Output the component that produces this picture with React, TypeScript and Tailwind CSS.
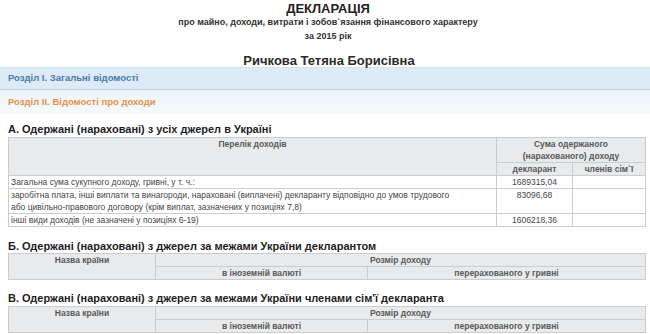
export default function App() {
  const th = "border border-[#c9cdd0] bg-[#e8eaeb] font-bold text-[#5a5a5a] text-center align-top leading-[12px] p-0";
  const td = "border border-[#c9cdd0] bg-white text-[#454545] leading-[12px] p-0 align-top";

  return (
    <div className="w-[650px] h-[334px] overflow-hidden bg-white font-['Liberation_Sans',Arial,sans-serif]">
      {/* title */}
      <div className="pt-[2px] pl-[6px] text-center text-[#222] font-bold">
        <div className="text-[13px] leading-[14px]">ДЕКЛАРАЦІЯ</div>
        <div className="text-[9px] leading-[12px] text-[#333]">про майно, доходи, витрати і зобов`язання фінансового характеру</div>
        <div className="text-[9px] leading-[16px] text-[#333]">за 2015 рік</div>
      </div>
      <div className="mt-[10px] pl-[8px] text-center text-[13px] leading-[13px] font-bold text-[#2a2a2a]">Ричкова Тетяна Борисівна</div>

      {/* sections */}
      <div className="h-[23px] border-t border-b border-t-[#d3e3f0] border-b-[#b9d2e6] bg-[#dcebf7] px-[8px] flex items-center text-[9.5px] font-bold text-[#4a7ca5]">
        Розділ І. Загальні відомості
      </div>
      <div className="h-[24px] bg-gradient-to-b from-[#edf4f9] to-[#f7fafc] px-[8px] flex items-center text-[9.5px] font-bold text-[#e3924a]">
        Розділ ІІ. Відомості про доходи
      </div>

      <div className="pl-[8px] pr-[5px]">
        {/* A */}
        <div className="mt-[7px] text-[11px] leading-[16px] font-bold text-[#1e1e1e]">А. Одержані (нараховані) з усіх джерел в Україні</div>
        <table className="w-[637px] border-collapse table-fixed text-[8.5px]">
          <colgroup>
            <col className="w-[488px]" />
            <col className="w-[76px]" />
            <col className="w-[73px]" />
          </colgroup>
          <tbody>
            <tr className="h-[24px]">
              <th rowSpan={2} className={th}>Перелік доходів</th>
              <th colSpan={2} className={th}>Сума одержаного<br />(нарахованого) доходу</th>
            </tr>
            <tr className="h-[13px]">
              <th className={th}>декларант</th>
              <th className={th}>членів сім`ї</th>
            </tr>
            <tr className="h-[13px]">
              <td className={td + " pl-[2px]"}>Загальна сума сукупного доходу, гривні, у т. ч.:</td>
              <td className={td + " text-center"}>1689315,04</td>
              <td className={td}></td>
            </tr>
            <tr className="h-[24px]">
              <td className={td + " pl-[2px]"}>
                <div className="whitespace-nowrap">заробітна плата, інші виплати та винагороди, нараховані (виплачені) декларанту відповідно до умов трудового</div>
                <div className="whitespace-nowrap">або цивільно-правового договору (крім виплат, зазначених у позиціях 7,8)</div>
              </td>
              <td className={td + " text-center"}>83096,68</td>
              <td className={td}></td>
            </tr>
            <tr className="h-[12px]">
              <td className={td + " pl-[2px]"}>інші види доходів (не зазначені у позиціях 6-19)</td>
              <td className={td + " text-center"}>1606218,36</td>
              <td className={td}></td>
            </tr>
          </tbody>
        </table>

        {/* Б */}
        <div className="mt-[12px] text-[11px] leading-[14px] font-bold text-[#1e1e1e]">Б. Одержані (нараховані) з джерел за межами України декларантом</div>
        <ForeignTable th={th} />

        {/* В */}
        <div className="mt-[10px] text-[11px] leading-[16px] font-bold text-[#1e1e1e]">В. Одержані (нараховані) з джерел за межами України членами сім'ї декларанта</div>
        <ForeignTable th={th} />
      </div>
    </div>
  );
}

function ForeignTable({ th }: { th: string }) {
  return (
    <table className="w-[637px] border-collapse table-fixed text-[8.5px]">
      <colgroup>
        <col className="w-[147px]" />
        <col className="w-[212px]" />
        <col className="w-[278px]" />
      </colgroup>
      <tbody>
        <tr className="h-[13px]">
          <th rowSpan={2} className={th}>Назва країни</th>
          <th colSpan={2} className={th}>Розмір доходу</th>
        </tr>
        <tr className="h-[13px]">
          <th className={th}>в іноземній валюті</th>
          <th className={th}>перерахованого у гривні</th>
        </tr>
      </tbody>
    </table>
  );
}
